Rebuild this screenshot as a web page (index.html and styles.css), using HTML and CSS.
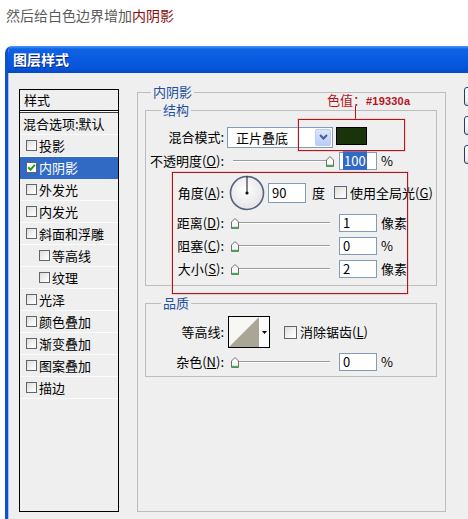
FILE: index.html
```html
<!DOCTYPE html>
<html lang="zh">
<head>
<meta charset="utf-8">
<title>图层样式</title>
<link rel="stylesheet" href="styles.css">
</head>
<body>
<p class="caption">然后给白色边界增加<span class="hl">内阴影</span></p>
<div class="window">
  <div class="titlebar">图层样式</div>
  <div class="client">
    <div class="list">
      <div class="list-head">样式</div>
      <div class="list-row blend">混合选项:默认</div>
      <div class="list-row"><span class="cb"></span>投影</div>
      <div class="list-row sel"><span class="cb on"><svg width="9" height="9" viewBox="0 0 9 9"><polyline points="1.2,4.3 3.5,6.8 7.8,1.8" fill="none" stroke="#1f9a2a" stroke-width="2"/></svg></span>内阴影</div>
      <div class="list-row"><span class="cb"></span>外发光</div>
      <div class="list-row"><span class="cb"></span>内发光</div>
      <div class="list-row"><span class="cb"></span>斜面和浮雕</div>
      <div class="list-row sub"><span class="cb"></span>等高线</div>
      <div class="list-row sub"><span class="cb"></span>纹理</div>
      <div class="list-row"><span class="cb"></span>光泽</div>
      <div class="list-row"><span class="cb"></span>颜色叠加</div>
      <div class="list-row"><span class="cb"></span>渐变叠加</div>
      <div class="list-row"><span class="cb"></span>图案叠加</div>
      <div class="list-row"><span class="cb"></span>描边</div>
    </div>

    <fieldset class="outer">
      <legend>内阴影</legend>
      <fieldset class="inner structure">
        <legend>结构</legend>
        <div class="row r-blend">
          <span class="lbl">混合模式:</span>
          <div class="select"><span class="select-val">正片叠底</span><span class="select-btn"><svg width="9" height="6" viewBox="0 0 9 6"><polyline points="1,1 4.5,4.5 8,1" fill="none" stroke="#4a5f8c" stroke-width="2"/></svg></span></div>
          <span class="swatch"></span>
        </div>
        <div class="row r-opacity">
          <span class="lbl">不透明度(<u>O</u>):</span>
          <div class="slider end"><svg class="thumb" width="8" height="11" viewBox="0 0 8 11"><path d="M0.5 4 L4 0.5 L7.5 4 V10.5 H0.5 Z" fill="#fafafa" stroke="#6f6f6f"/><path d="M1 9.6 H7" stroke="#3fb54c" stroke-width="1.6"/></svg></div>
          <span class="field"><span class="hilite">100</span></span>
          <span class="unit">%</span>
        </div>
        <div class="row r-angle">
          <span class="lbl">角度(<u>A</u>):</span>
          <svg class="dial" width="36" height="36" viewBox="0 0 36 36">
            <defs><radialGradient id="dg" cx="0.45" cy="0.4" r="0.6"><stop offset="0" stop-color="#ffffff"/><stop offset="1" stop-color="#e4e4e8"/></radialGradient></defs>
            <circle cx="18" cy="18" r="16.5" fill="url(#dg)" stroke="#56627e" stroke-width="1.6"/>
            <line x1="18" y1="18" x2="18" y2="1.5" stroke="#111" stroke-width="1"/>
            <circle cx="18" cy="18" r="1.6" fill="#111"/>
          </svg>
          <span class="field angle">90</span>
          <span class="unit deg">度</span>
          <span class="cb big"></span>
          <span class="cb-text">使用全局光(<u>G</u>)</span>
        </div>
        <div class="row r-dist">
          <span class="lbl">距离(<u>D</u>):</span>
          <div class="slider"><svg class="thumb" width="8" height="11" viewBox="0 0 8 11"><path d="M0.5 4 L4 0.5 L7.5 4 V10.5 H0.5 Z" fill="#fafafa" stroke="#6f6f6f"/><path d="M1 9.6 H7" stroke="#3fb54c" stroke-width="1.6"/></svg></div>
          <span class="field">1</span>
          <span class="unit">像素</span>
        </div>
        <div class="row r-choke">
          <span class="lbl">阻塞(<u>C</u>):</span>
          <div class="slider"><svg class="thumb" width="8" height="11" viewBox="0 0 8 11"><path d="M0.5 4 L4 0.5 L7.5 4 V10.5 H0.5 Z" fill="#fafafa" stroke="#6f6f6f"/><path d="M1 9.6 H7" stroke="#3fb54c" stroke-width="1.6"/></svg></div>
          <span class="field">0</span>
          <span class="unit">%</span>
        </div>
        <div class="row r-size">
          <span class="lbl">大小(<u>S</u>):</span>
          <div class="slider"><svg class="thumb" width="8" height="11" viewBox="0 0 8 11"><path d="M0.5 4 L4 0.5 L7.5 4 V10.5 H0.5 Z" fill="#fafafa" stroke="#6f6f6f"/><path d="M1 9.6 H7" stroke="#3fb54c" stroke-width="1.6"/></svg></div>
          <span class="field">2</span>
          <span class="unit">像素</span>
        </div>
      </fieldset>

      <fieldset class="inner quality">
        <legend>品质</legend>
        <div class="row r-contour">
          <span class="lbl">等高线:</span>
          <div class="contour">
            <svg class="curve" width="30" height="30" viewBox="0 0 30 30"><rect width="30" height="30" fill="#f7f7f3"/><polygon points="0,30 30,0 30,30" fill="#a9a597"/></svg>
            <span class="contour-btn"><svg width="5" height="3" viewBox="0 0 5 3"><polygon points="0,0 5,0 2.5,3" fill="#000"/></svg></span>
          </div>
          <span class="cb big aa"></span>
          <span class="cb-text">消除锯齿(<u>L</u>)</span>
        </div>
        <div class="row r-noise">
          <span class="lbl">杂色(<u>N</u>):</span>
          <div class="slider"><svg class="thumb" width="8" height="11" viewBox="0 0 8 11"><path d="M0.5 4 L4 0.5 L7.5 4 V10.5 H0.5 Z" fill="#fafafa" stroke="#6f6f6f"/><path d="M1 9.6 H7" stroke="#3fb54c" stroke-width="1.6"/></svg></div>
          <span class="field">0</span>
          <span class="unit">%</span>
        </div>
      </fieldset>
    </fieldset>

    <div class="buttons">
      <span class="btn"></span>
      <span class="btn"></span>
      <span class="btn"></span>
    </div>
  </div>
</div>

<div class="note-label">色值：<span class="hex">#19330a</span></div>
<div class="note-line"></div>
<div class="note-box box-color"></div>
<div class="note-box box-params"></div>
</body>
</html>
```

FILE: styles.css
```css
* { box-sizing: border-box; }
html, body { margin: 0; padding: 0; overflow: hidden; background: #fff; }
body {
  width: 468px;
  height: 519px;
  font-family: "Noto Sans CJK SC", "Liberation Sans", sans-serif;
  font-size: 13px;
  color: #000;
}
u { text-decoration: underline; text-underline-offset: 1px; }

.caption {
  margin: 0;
  padding: 7px 6px 0;
  height: 23px;
  font-size: 14px;
  line-height: 16px;
  color: #5a5a5a;
}
.caption .hl { color: #8a0c0c; }

.window {
  margin: 23px 0 0 5px;
  width: 463px;
  border-left: 3px solid #1150c8;
  border-radius: 7px 0 0 0;
  overflow: hidden;
}
.titlebar {
  height: 27px;
  line-height: 27px;
  padding-left: 5px;
  color: #fff;
  font-size: 14px;
  font-weight: bold;
  text-shadow: 1px 1px 0 #0a2a86;
  background: linear-gradient(to bottom, #4a9bff 0, #0f63e4 3px, #0a5be0 45%, #0656db 80%, #0448c4 100%);
}
.client {
  display: flex;
  align-items: flex-start;
  height: 450px;
  padding: 11px 0 0 11px;
  overflow: hidden;
  background: #efefef;
  box-shadow: inset 1px 0 0 #a9c2ee;
}

/* left list */
.list {
  flex: none;
  width: 100px;
  height: 423px;
  margin-top: 5px;
  border: 1px solid #000;
  background: #efefef;
}
.list-head {
  height: 21px;
  line-height: 20px;
  padding-left: 4px;
  border-bottom: 1px solid #000;
  box-shadow: 0 1px 0 #fff;
}
.list-row {
  display: flex;
  align-items: center;
  height: 22px;
  padding-left: 6px;
  border-bottom: 1px solid #fbfbfb;
  white-space: nowrap;
  line-height: 21px;
}
.list-row.blend {
  height: 23px;
  margin-top: 1px;
  padding-left: 3px;
  border-top: 1px solid #3c3c3c;
}
.list-row.sub { padding-left: 19px; }
.list-row.sel { background: #316ac5; color: #fff; border-bottom-color: #316ac5; }

.cb {
  flex: none;
  display: inline-flex;
  align-items: center;
  justify-content: center;
  width: 11px;
  height: 11px;
  margin-right: 2px;
  border: 1px solid #5d6570;
  background: linear-gradient(135deg, #dcdcd6 0%, #f4f4f2 60%, #ffffff 100%);
}
.cb.on { background: #fff; }
.cb.big { width: 13px; height: 13px; margin-right: 0; }

/* fieldsets */
fieldset {
  margin: 0;
  padding: 0;
  min-width: 0;
  border: 1px solid #bdbdbd;
}
legend {
  height: 16px;
  padding: 0 2px;
  line-height: 16px;
  color: #1d4f9f;
}
.outer {
  flex: none;
  width: 309px;
  height: 428px;
  margin-left: 18px;
  padding: 2px 8px 0 7px;
}
.outer > legend { margin-left: 6px; }
.inner { width: 292px; }
.inner > legend { margin-left: 15px; }
.structure { padding-bottom: 5px; }
.quality { margin-top: 9px; padding-bottom: 3px; }

.row {
  display: flex;
  align-items: center;
  height: 22px;
  white-space: nowrap;
  line-height: 16px;
}
.lbl { flex: none; width: 78px; text-align: right; }

.r-blend { margin-top: 8px; }
.r-opacity { margin-top: 2px; }
.r-angle { margin-top: 3px; height: 35px; }
.r-dist { margin-top: 2px; }
.r-choke, .r-size { margin-top: 1px; }
.r-contour { margin-top: 5px; height: 32px; }
.r-noise { margin-top: 3px; }

/* select */
.select {
  display: flex;
  width: 106px;
  height: 21px;
  margin-left: 3px;
  padding: 1px;
  border: 1px solid #7f9db9;
  background: #fff;
}
.select-val { flex: 1; padding-left: 7px; line-height: 17px; }
.select-btn {
  display: flex;
  align-items: center;
  justify-content: center;
  width: 16px;
  border: 1px solid #b9ccf5;
  border-radius: 2px;
  background: linear-gradient(to bottom, #dbe6fd, #b8cdf8);
}
.swatch {
  align-self: flex-start;
  width: 31px;
  height: 18px;
  margin: 1px 0 0 3px;
  border: 1px solid #000;
  background: #19330a;
}

/* sliders */
.slider {
  display: flex;
  align-items: center;
  width: 106px;
  height: 12px;
  margin-left: 5px;
  padding: 0 1px 0 2px;
  background:
    linear-gradient(#9c9c9c, #9c9c9c) no-repeat 4px 5px / 97px 1px,
    linear-gradient(#ffffff, #ffffff) no-repeat 4px 6px / 97px 1px;
}
.slider.end { justify-content: flex-end; }
.thumb { display: block; }

.field {
  width: 38px;
  height: 18px;
  margin-left: 4px;
  padding-left: 3px;
  border: 1px solid #7f9db9;
  background: #fff;
  line-height: 16px;
}
.hilite { background: #316ac5; color: #fff; padding: 0 1px; }
.unit { margin-left: 4px; }

.dial { flex: none; margin-left: 5px; }
.field.angle { height: 20px; line-height: 18px; margin-left: 3px; }
.unit.deg { margin-left: 6px; }
.r-angle .cb.big { margin-left: 9px; }
.cb-text { margin-left: 3px; }

/* contour */
.contour {
  display: flex;
  width: 42px;
  height: 32px;
  margin-left: 4px;
  border: 1px solid #000;
  background: #fff;
}
.curve { display: block; }
.contour-btn {
  flex: 1;
  display: flex;
  align-items: center;
  justify-content: center;
  background: #fbfbfb;
}
.cb.aa { margin-left: 14px; }

/* buttons column (cut off at the right edge) */
.buttons {
  flex: none;
  display: flex;
  flex-direction: column;
  gap: 10px;
  margin: 3px 0 0 18px;
}
.btn {
  display: block;
  width: 75px;
  height: 19px;
  border: 1px solid #1d3f70;
  border-radius: 3px;
  background: linear-gradient(to bottom, #ffffff, #f0efea 80%, #d8d3c8);
}

/* red annotations */
.note-label {
  position: absolute;
  left: 327px;
  top: 92px;
  font-size: 13px;
  line-height: 16px;
  color: #b3151b;
}
.note-label .hex {
  font-family: "Liberation Sans", sans-serif;
  font-size: 11px;
  font-weight: bold;
  letter-spacing: 0.2px;
}
.note-line {
  position: absolute;
  left: 355px;
  top: 106px;
  width: 1px;
  height: 13px;
  background: #b3151b;
}
.note-box {
  position: absolute;
  border: 1px solid #b0161d;
  box-shadow: 0 0 0 1px rgba(240, 150, 150, 0.35);
}
.box-color { left: 298px; top: 119px; width: 107px; height: 32px; }
.box-params { left: 172px; top: 172px; width: 236px; height: 122px; }
```
